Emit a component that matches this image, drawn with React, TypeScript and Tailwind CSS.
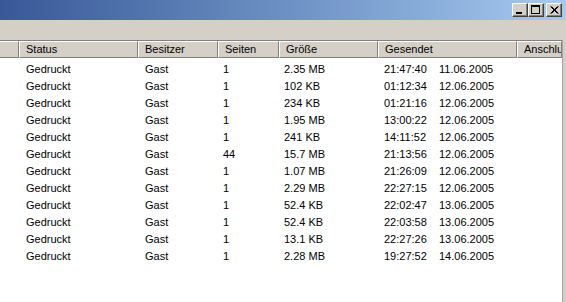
import React from "react";

const rows: [string, string, string, string, string, string][] = [
  ["Gedruckt", "Gast", "1", "2.35 MB", "21:47:40", "11.06.2005"],
  ["Gedruckt", "Gast", "1", "102 KB", "01:12:34", "12.06.2005"],
  ["Gedruckt", "Gast", "1", "234 KB", "01:21:16", "12.06.2005"],
  ["Gedruckt", "Gast", "1", "1.95 MB", "13:00:22", "12.06.2005"],
  ["Gedruckt", "Gast", "1", "241 KB", "14:11:52", "12.06.2005"],
  ["Gedruckt", "Gast", "44", "15.7 MB", "21:13:56", "12.06.2005"],
  ["Gedruckt", "Gast", "1", "1.07 MB", "21:26:09", "12.06.2005"],
  ["Gedruckt", "Gast", "1", "2.29 MB", "22:27:15", "12.06.2005"],
  ["Gedruckt", "Gast", "1", "52.4 KB", "22:02:47", "13.06.2005"],
  ["Gedruckt", "Gast", "1", "52.4 KB", "22:03:58", "13.06.2005"],
  ["Gedruckt", "Gast", "1", "13.1 KB", "22:27:26", "13.06.2005"],
  ["Gedruckt", "Gast", "1", "2.28 MB", "19:27:52", "14.06.2005"],
];

function TitleButton({ children, className = "" }: { children: React.ReactNode; className?: string }) {
  return (
    <div
      className={
        "w-[16px] h-[14px] bg-[#d4d0c8] border-t border-l border-t-white border-l-white border-r border-b border-r-[#404040] border-b-[#404040] shadow-[inset_-1px_-1px_0_#808080] flex items-center justify-center " +
        className
      }
    >
      {children}
    </div>
  );
}

const headerCell =
  "h-full shrink-0 bg-[#d4d0c8] border-t border-l border-t-white border-l-white border-r border-b border-r-[#808080] border-b-[#808080] flex items-center pl-[6px] overflow-hidden whitespace-nowrap";

export default function App() {
  return (
    <div
      className="w-[566px] h-[302px] bg-[#d4d0c8] overflow-hidden text-[11px] text-black flex flex-col"
      style={{ fontFamily: '"Liberation Sans", Arial, sans-serif' }}
    >
      <div className="h-[20px] shrink-0 bg-gradient-to-r from-[#385897] to-[#a6caf0] flex items-center justify-end pr-[4px]">
        <div className="flex items-center">
          <TitleButton>
            <svg width="14" height="12" viewBox="0 0 14 12">
              <rect x="3" y="8" width="6" height="2" fill="#000" />
            </svg>
          </TitleButton>
          <TitleButton>
            <svg width="14" height="12" viewBox="0 0 14 12">
              <rect x="2.5" y="1.5" width="8" height="8" fill="none" stroke="#000" strokeWidth="1" />
              <rect x="2" y="1" width="9" height="2" fill="#000" />
            </svg>
          </TitleButton>
          <TitleButton className="ml-[2px]">
            <svg width="14" height="12" viewBox="0 0 14 12">
              <path d="M3.5 2.5 L10.5 9.5 M4.5 2.5 L11.5 9.5 M10.5 2.5 L3.5 9.5 M11.5 2.5 L4.5 9.5" stroke="#000" strokeWidth="1" />
            </svg>
          </TitleButton>
        </div>
      </div>
      <div className="h-[20px] shrink-0" />
      <div className="flex-1 flex min-h-0">
        <div className="flex-1 flex flex-col border-t border-t-[#808080] bg-white min-w-0">
          <div className="h-[17px] shrink-0 flex bg-[#d4d0c8]">
            <div className={headerCell + " w-[19px] border-l-0"} />
            <div className={headerCell + " w-[119px]"}>Status</div>
            <div className={headerCell + " w-[80px] pl-[4px]"}>Besitzer</div>
            <div className={headerCell + " w-[61px] pl-[4px]"}>Seiten</div>
            <div className={headerCell + " w-[99px]"}>Größe</div>
            <div className={headerCell + " w-[139px]"}>Gesendet</div>
            <div className={headerCell + " flex-1"}>Anschlu</div>
          </div>
          <div className="pt-[3px] flex flex-col">
            {rows.map((r, i) => (
              <div key={i} className="h-[17px] flex items-center whitespace-nowrap leading-[17px]">
                <div className="w-[19px] shrink-0" />
                <div className="w-[119px] shrink-0 pl-[7px]">{r[0]}</div>
                <div className="w-[80px] shrink-0 pl-[7px]">{r[1]}</div>
                <div className="w-[61px] shrink-0 pl-[5px]">{r[2]}</div>
                <div className="w-[99px] shrink-0 pl-[5px]">{r[3]}</div>
                <div className="w-[139px] shrink-0 pl-[6px] flex">
                  <span className="w-[55px]">{r[4]}</span>
                  <span>{r[5]}</span>
                </div>
                <div className="flex-1" />
              </div>
            ))}
          </div>
        </div>
        <div className="w-[1px] shrink-0 bg-[#a8a49c]" />
        <div className="w-[3px] shrink-0 bg-[#d4d0c8]" />
      </div>
    </div>
  );
}
